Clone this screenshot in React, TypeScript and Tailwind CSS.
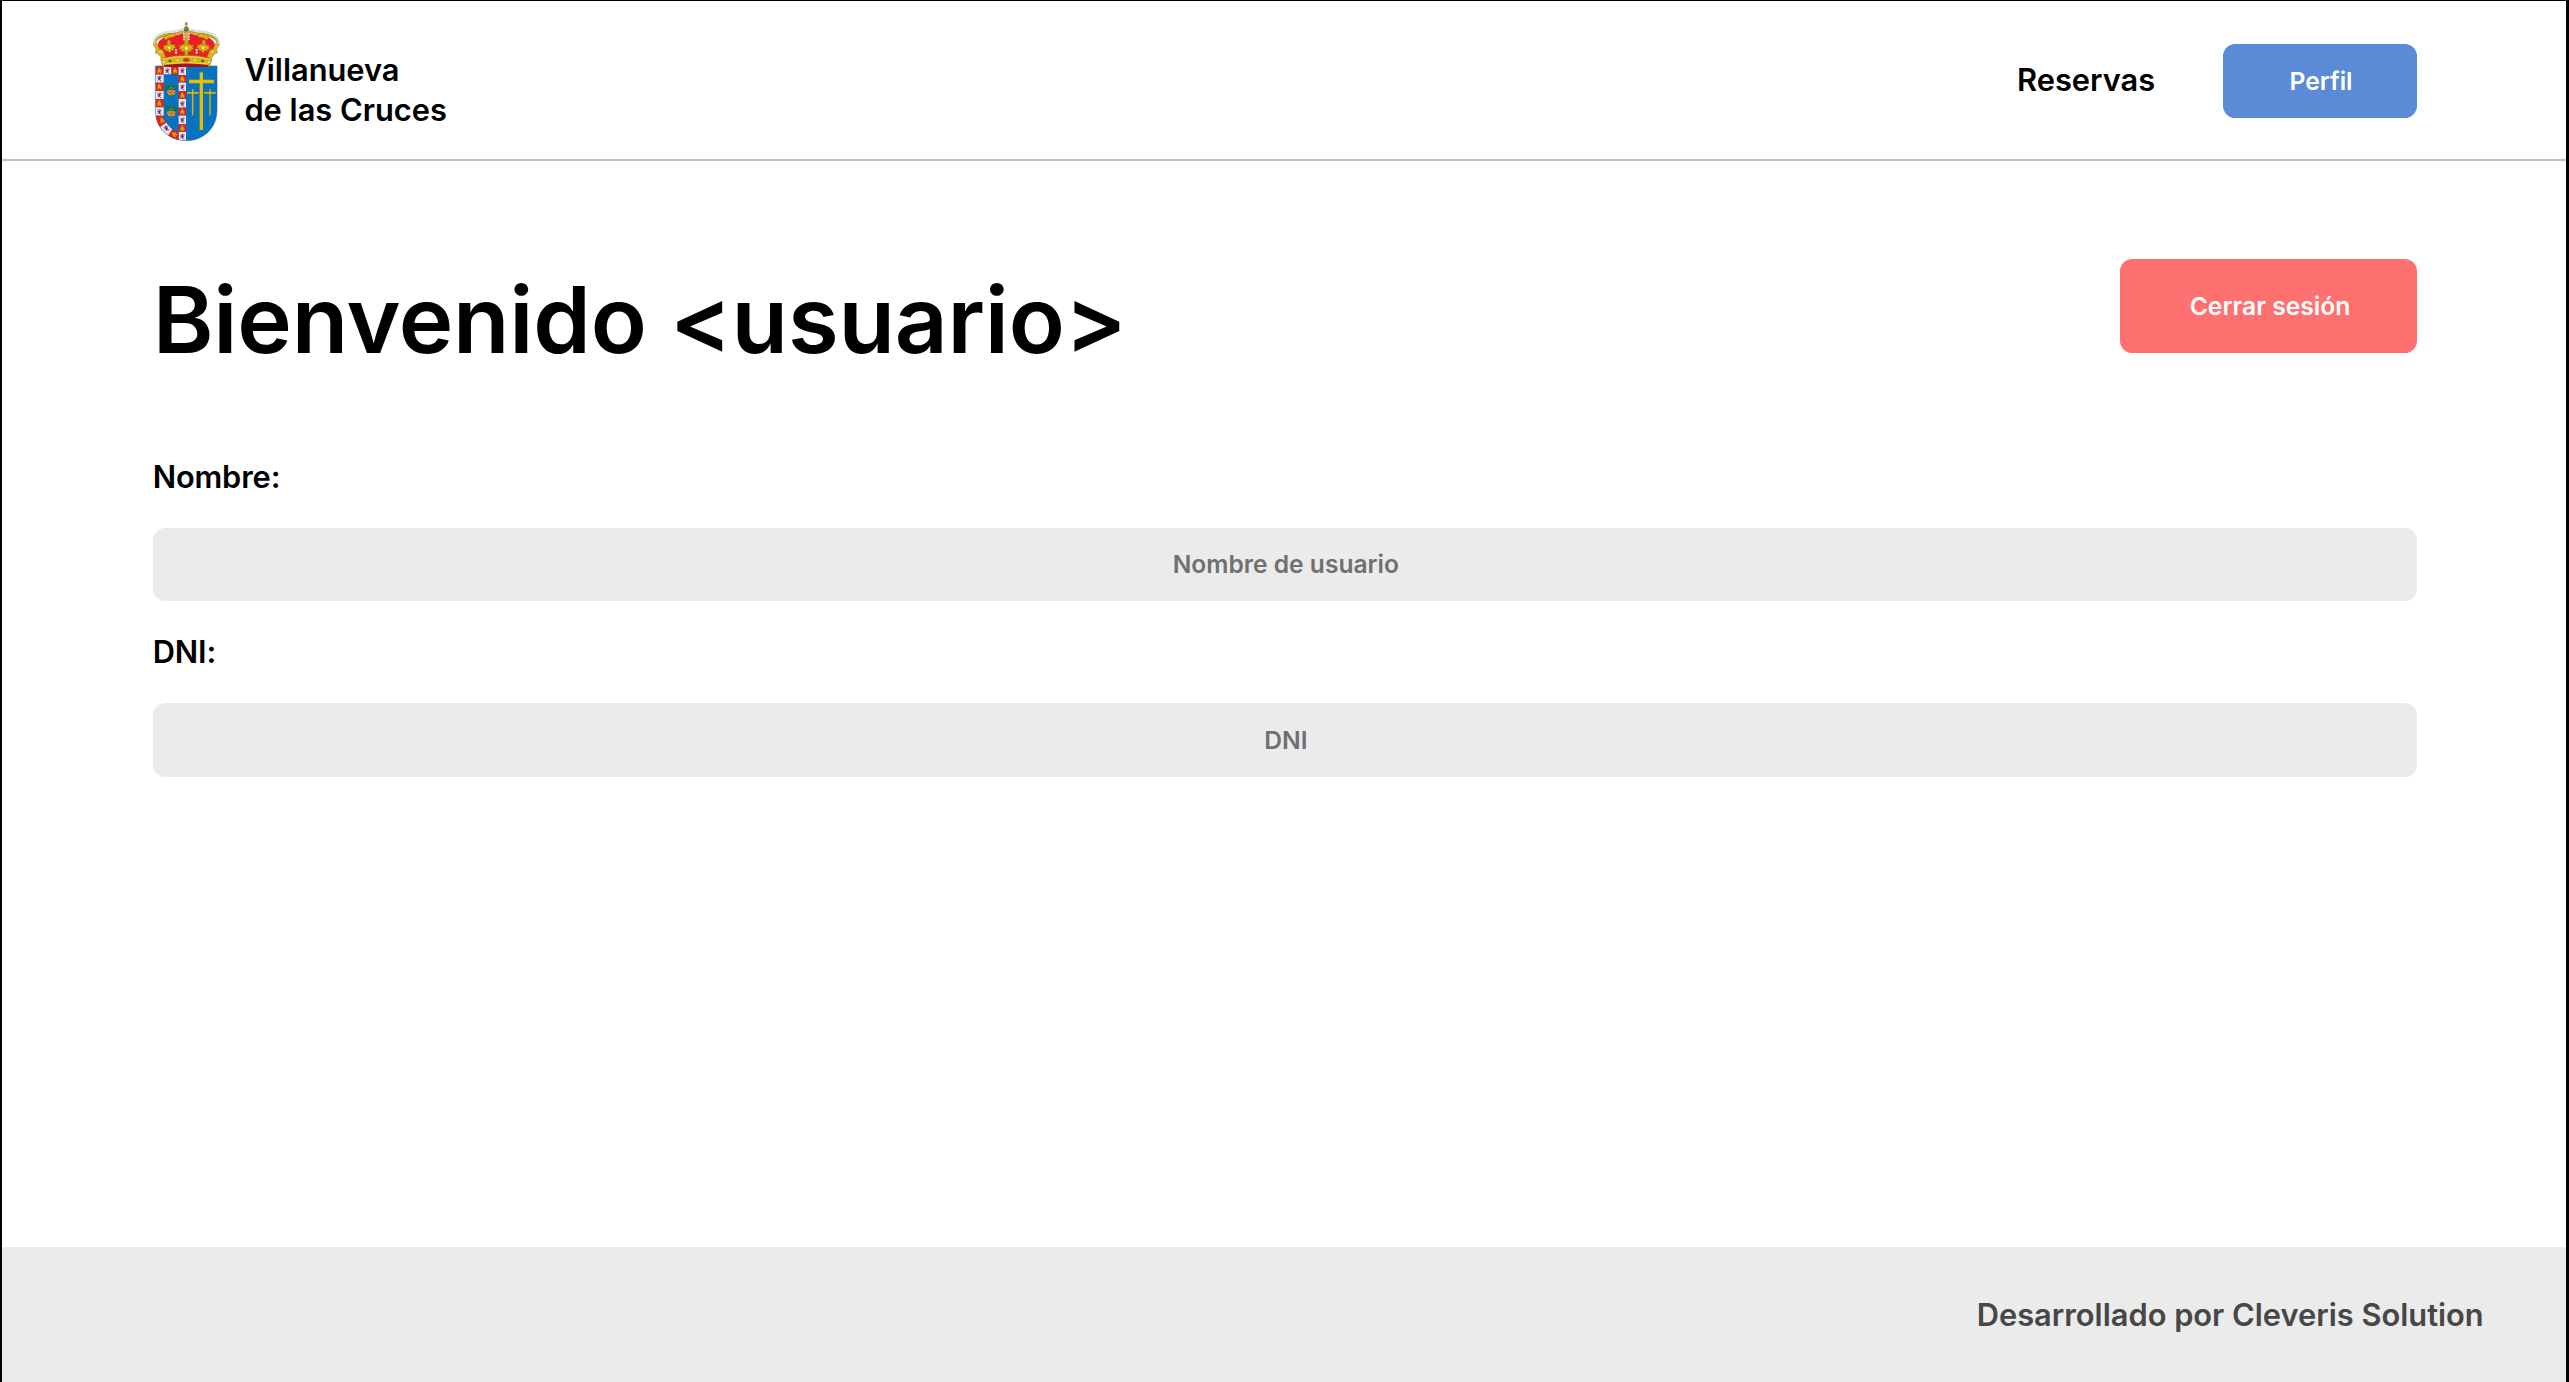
import React from "react";

const GOLD = "#dcb214";
const GOLD_DARK = "#8a6a10";

// Border tiles of the left half: x, y, width, height, red?
const tiles: [number, number, number, number, boolean][] = [
  [466, 200, 25, 24, true],
  [491, 200, 23, 24, false],
  [514, 200, 22, 24, true],
  [536, 200, 22, 25, false],
  [466, 224, 25, 24, false],
  [466, 248, 25, 25, true],
  [466, 273, 25, 24, false],
  [466, 297, 25, 25, true],
  [466, 322, 25, 25, false],
  [536, 225, 22, 23, true],
  [536, 248, 22, 25, false],
  [536, 273, 22, 24, true],
  [536, 297, 22, 26, false],
  [536, 323, 22, 24, true],
  [536, 347, 22, 26, false],
  [536, 373, 22, 23, true],
  [536, 396, 22, 26, false],
];

function Castle({ x, y, r = 0 }: { x: number; y: number; r?: number }) {
  return (
    <g transform={`translate(${x} ${y}) rotate(${r})`}>
      <path d="M-6 8V-2h2v-4h2v-3h4v3h2v4h2V8Z" fill="#e3a416" stroke="#a2530c" strokeWidth="1" />
      <path d="M-1.5 8V4h3v4Z" fill="#7d5a12" />
    </g>
  );
}

function Lion({ x, y, r = 0 }: { x: number; y: number; r?: number }) {
  return (
    <g transform={`translate(${x} ${y}) rotate(${r})`} stroke="#6d2370" fill="none" strokeWidth="2.4">
      <path d="M-6-6l4 3 4-4 2 4 3-2M-6 0l5-1 6 2M-5 7l4-5 3 5 4 1" />
      <path d="M-1-3l2 7" strokeWidth="5" />
    </g>
  );
}

function Basket({ y }: { y: number }) {
  return (
    <g transform={`translate(514 ${y})`}>
      <path d="M-19-12l6-3 5 3 5-4 6 0 5 4 6-3 5 4-1 12-8 6-20 0-8-6Z" fill="#14756f" />
      <path d="M-18-5l5 2M18-5l-6 3M-9-10l4 4M8-10l-4 4" stroke="#0b4658" strokeWidth="3" />
      <path d="M-6-1l3-4h6l4 4" stroke="#c47a2c" strokeWidth="2.4" fill="none" />
      <path d="M-13 5Q0-1 13 5Q12 14 6 18H-6Q-12 14-13 5Z" fill="#e5b02a" />
      <path d="M-10 5l6 7 5-8 6 8 4-7M-5 15l5-4 5 5" stroke="#d8442a" strokeWidth="3" fill="none" />
      <path d="M-6 18H6" stroke="#7c5214" strokeWidth="2" />
    </g>
  );
}

function Leaf({ x, y, s = 1, r = 0 }: { x: number; y: number; s?: number; r?: number }) {
  return (
    <g transform={`translate(${x} ${y}) rotate(${r}) scale(${s})`}>
      <path
        d="M0-24l5 4 1 8-3 5 6-3 4 4 7-1-3 6 4 5-7 1-1 6-7-1-3 6h-6l-3-6-7 1-1-6-7-1 4-5-3-6 7 1 4-4 6 3-3-5 1-8Z"
        fill={GOLD}
        stroke={GOLD_DARK}
        strokeWidth="1.4"
      />
      <path d="M-11 2l5 3M11 2l-5 3M0-19v10M-6 11l3-4M6 11l-3-4" stroke="#a97d10" strokeWidth="2" />
      <circle cx="0" cy="2" r="3.6" fill="#fff4c4" />
    </g>
  );
}

function Pearls({ points }: { points: [number, number][] }) {
  return (
    <g fill="#f8f8f8" stroke="#9c9c9c" strokeWidth="1">
      {points.map(([x, y]) => (
        <circle key={`${x}-${y}`} cx={x} cy={y} r="3.2" />
      ))}
    </g>
  );
}

const leftPearls: [number, number][] = [
  [463, 128], [464, 120], [468, 113], [474, 107], [481, 103], [488, 101], [494, 98],
  [501, 97], [508, 96], [515, 95], [522, 94], [529, 94], [536, 92], [543, 90], [550, 90],
];
const rightPearls = leftPearls.map(([x, y]) => [1118 - x, y] as [number, number]);

function CoatOfArms() {
  return (
    <svg viewBox="459 66 201 357" className="h-[119px] w-[67px] shrink-0" aria-label="Escudo de Villanueva de las Cruces">
      <defs>
        <clipPath id="shield">
          <path d="M466 198H651V330C651 385 610 422 558.5 422S466 385 466 330Z" />
        </clipPath>
      </defs>

      <g clipPath="url(#shield)">
        <rect x="466" y="198" width="186" height="225" fill="#0772bf" />
        {tiles.map(([x, y, w, h, red]) => (
          <rect key={`${x}-${y}`} x={x} y={y} width={w} height={h} fill={red ? "#ea1c25" : "#eee9f0"} />
        ))}
        <path d="M466 347H491Q492 360 499 369L475 385L462 376Z" fill="#ea1c25" />
        <path d="M499 368Q506 380 517 388L506 412L470 388Z" fill="#eee9f0" />
        <path d="M517 387Q526 393 536 395V424H512L503 408Z" fill="#ea1c25" />
        <path d="M491 224H536" stroke="#0a4e86" strokeWidth="1.5" />
        <Castle x={478} y={212} />
        <Castle x={525} y={212} />
        <Castle x={478} y={260} />
        <Castle x={478} y={310} />
        <Castle x={486} y={361} r={-20} />
        <Castle x={523} y={403} r={-50} />
        <Castle x={547} y={237} />
        <Castle x={547} y={286} />
        <Castle x={547} y={335} />
        <Castle x={547} y={385} />
        <Lion x={502} y={212} />
        <Lion x={547} y={212} />
        <Lion x={478} y={235} />
        <Lion x={478} y={285} />
        <Lion x={478} y={335} />
        <Lion x={499} y={385} r={-35} />
        <Lion x={547} y={261} />
        <Lion x={547} y={311} />
        <Lion x={547} y={360} />
        <Lion x={547} y={409} />
        <Basket y={268} />
        <Basket y={331} />
        <g fill="#e6bf0a" stroke="#8f8a2c" strokeWidth="1">
          <path d="M599 217H609V239H642V250H609V390H599V250H567V239H599Z" />
          <path d="M576 267H580V276H596V281H580V346H576V281H561V276H576Z" />
          <path d="M628 267H632V276H647V281H632V346H628V281H612V276H628Z" />
        </g>
      </g>
      <path d="M466 198H651V330C651 385 610 422 558.5 422S466 385 466 330Z" fill="none" stroke="#33557a" strokeWidth="1.5" />

      <path d="M474 140C470 122 490 108 520 107Q545 104 559 94Q573 104 598 107C628 108 648 122 644 140L630 174H488Z" fill="#ee1c24" />
      <path d="M463 134C463 112 492 104 520 102Q546 98 559 88Q572 98 598 102C626 104 655 112 655 134" fill="none" stroke={GOLD_DARK} strokeWidth="7" />
      <path d="M463 134C463 112 492 104 520 102Q546 98 559 88Q572 98 598 102C626 104 655 112 655 134" fill="none" stroke={GOLD} strokeWidth="5" />
      <path d="M559 92V172M494 116Q506 104 522 107M624 116Q612 104 596 107" fill="none" stroke={GOLD_DARK} strokeWidth="11" />
      <path d="M559 92V172M494 116Q506 104 522 107M624 116Q612 104 596 107" fill="none" stroke={GOLD} strokeWidth="9" />
      <path d="M460 134L470 128L478 146L489 150L497 172L486 176L472 160L466 160L468 148Z" fill={GOLD} stroke={GOLD_DARK} strokeWidth="1.2" />
      <path d="M658 134L648 128L640 146L629 150L621 172L632 176L646 160L652 160L650 148Z" fill={GOLD} stroke={GOLD_DARK} strokeWidth="1.2" />
      <Pearls points={leftPearls} />
      <Pearls points={rightPearls} />
      <Pearls points={[[552, 102], [552, 110], [552, 118], [566, 102], [566, 110], [566, 118]]} />
      <Leaf x={508} y={142} r={-5} s={0.95} />
      <Leaf x={610} y={142} r={5} s={0.95} />
      <Leaf x={559} y={143} s={1.1} />
      <path d="M482 176Q559 156 636 176L629 200H489Z" fill={GOLD} stroke={GOLD_DARK} strokeWidth="1.5" />
      <path d="M486 178Q559 161 632 178M490 192Q559 183 628 192" fill="none" stroke="#f6dc62" strokeWidth="2.5" />
      <path d="M492 195Q559 186 626 195L624 201H494Z" fill="#a3151b" />
      <ellipse cx="559" cy="180" rx="9.5" ry="5.5" fill="#dd2417" stroke="#7e5b10" strokeWidth="1.2" />
      <ellipse cx="510" cy="183" rx="5" ry="3.5" fill="#217b35" />
      <ellipse cx="608" cy="183" rx="5" ry="3.5" fill="#217b35" />
      <Pearls points={[[491, 186], [533, 181], [585, 181], [627, 186], [480, 156], [528, 150], [590, 150], [638, 156], [528, 158], [590, 158]]} />
      <circle cx="559" cy="87" r="7" fill="#1873ae" stroke={GOLD_DARK} strokeWidth="1.5" />
      <path d="M559 66V82M554 72H564" stroke={GOLD_DARK} strokeWidth="3.6" />
      <path d="M559 67V82M555 72H563" stroke={GOLD} strokeWidth="1.6" />
      <path d="M552 86H566" stroke={GOLD} strokeWidth="2" />
    </svg>
  );
}

function Field({ label, placeholder, className }: { label: string; placeholder: string; className: string }) {
  return (
    <div className={className}>
      <p className="text-[30.8px] leading-[40px] tracking-[-0.15px]">{label}</p>
      <div className="mt-[31px] flex h-[73.4px] items-center justify-center rounded-[12.3px] bg-[#ebebeb] pl-[2px] text-[24.6px] text-[#707070]">
        {placeholder}
      </div>
    </div>
  );
}

export default function App() {
  return (
    <div className="flex h-[1382px] w-full flex-col border-t border-r-[3px] border-l-2 border-black bg-white font-['Inter',sans-serif] font-semibold text-black">
      <header className="flex h-[160px] shrink-0 items-start justify-between border-b-2 border-[#c0c0c0] pr-[149px] pl-[151px]">
        <div className="flex pt-[21px]">
          <CoatOfArms />
          <p className="mt-[27.5px] ml-[24.4px] text-[30.8px] leading-[40px]">
            Villanueva
            <br />
            de las Cruces
          </p>
        </div>
        <nav className="flex items-center gap-[67.8px] pt-[43px]">
          <a className="-mt-px text-[30.8px] leading-[40px]">Reservas</a>
          <button className="flex h-[73.5px] w-[194px] items-center justify-center rounded-[12.3px] bg-[#5b8ad7] pt-px pl-[2px] text-[24.65px] text-white">
            Perfil
          </button>
        </nav>
      </header>

      <main className="flex grow flex-col pr-[149px] pl-[150.7px]">
        <div className="flex items-start justify-between pt-[98px]">
          <h1 className="mt-[4.5px] text-[92.3px] leading-[112px] tracking-[-0.2px]">Bienvenido &lt;usuario&gt;</h1>
          <button className="flex h-[93.7px] w-[297px] items-center justify-center rounded-[12.3px] bg-[#ff7070] pt-[2px] pl-[3px] text-[24.65px] text-white">
            Cerrar sesión
          </button>
        </div>
        <Field className="mt-[81.6px]" label="Nombre:" placeholder="Nombre de usuario" />
        <Field className="mt-[31px]" label="DNI:" placeholder="DNI" />
      </main>

      <footer className="flex h-[135px] shrink-0 items-center justify-end bg-[#ebebeb] pt-px pr-[82.3px] text-[30.8px] text-[#474747]">
        Desarrollado por Cleveris Solution
      </footer>
    </div>
  );
}
